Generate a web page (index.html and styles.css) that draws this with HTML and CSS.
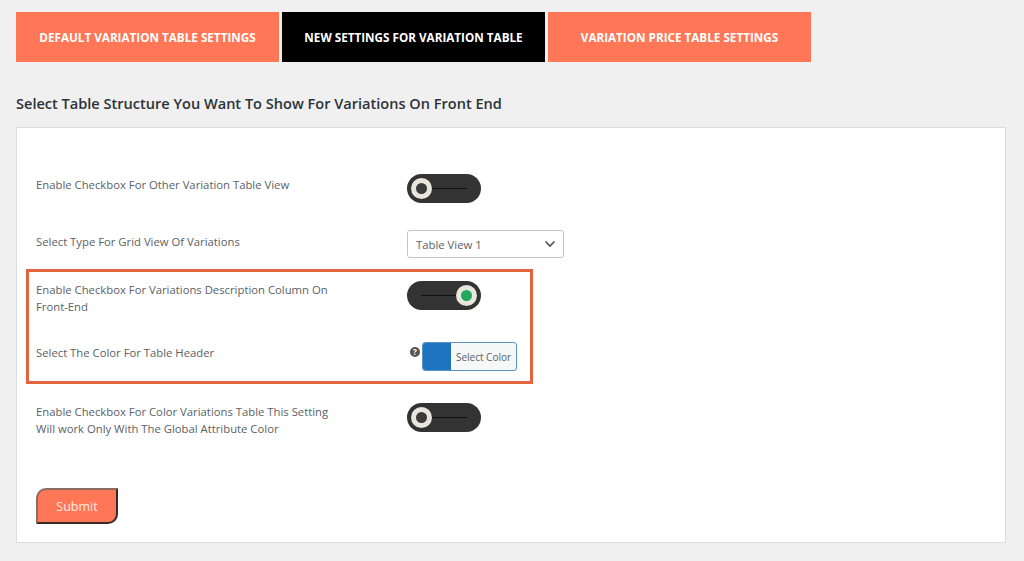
FILE: index.html
```html
<!DOCTYPE html>
<html lang="en">
<head>
<meta charset="UTF-8">
<meta name="viewport" content="width=device-width, initial-scale=1.0">
<title>Variation Table Settings</title>
<link rel="stylesheet" href="styles.css">
</head>
<body>
<div class="tabs">
<div class="tab">Default Variation Table Settings</div>
<div class="tab active">New Settings For Variation Table</div>
<div class="tab">Variation Price Table Settings</div>
</div>
<h2 class="page-title">Select Table Structure You Want To Show For Variations On Front End</h2>
<div class="card">
<div class="row row-first">
<div class="row-label">Enable Checkbox For Other Variation Table View</div>
<div class="toggle"><span class="toggle-line"></span><span class="knob"></span></div>
</div>
<div class="row row-select">
<div class="row-label">Select Type For Grid View Of Variations</div>
<div class="select">
<span>Table View 1</span>
<svg width="12" height="8" viewBox="0 0 12 8"><path d="M1.5 1.5 L6 6 L10.5 1.5" fill="none" stroke="#555" stroke-width="1.7"/></svg>
</div>
</div>
<div class="highlight">
<div class="row">
<div class="row-label label-top">Enable Checkbox For Variations Description Column On Front-End</div>
<div class="toggle on"><span class="toggle-line"></span><span class="knob"></span></div>
</div>
<div class="row row-color">
<div class="row-label">Select The Color For Table Header</div>
<div class="color-wrap">
<span class="help">?</span>
<div class="color-button">
<span class="swatch"></span>
<span class="color-text">Select Color</span>
</div>
</div>
</div>
</div>
<div class="row row-last">
<div class="row-label label-top">Enable Checkbox For Color Variations Table This Setting Will work Only With The Global Attribute Color</div>
<div class="toggle"><span class="toggle-line"></span><span class="knob"></span></div>
</div>
<button class="submit">Submit</button>
</div>
</body>
</html>
```

FILE: styles.css
```css
* {
  margin: 0;
  padding: 0;
  box-sizing: border-box;
}

body {
  background-color: #f0f0f0;
  font-family: "Open Sans", "Noto Sans", sans-serif;
  padding: 12px 18px 0 16px;
  height: 561px;
  overflow: hidden;
}

/* Tabs */
.tabs {
  display: flex;
  gap: 3px;
}

.tab {
  width: 263px;
  height: 50px;
  background-color: #ff7756;
  color: #fff;
  display: flex;
  align-items: center;
  justify-content: center;
  font-size: 11.7px;
  font-weight: 700;
  text-transform: uppercase;
}

.tab.active {
  background-color: #000;
}

.page-title {
  font-size: 14.55px;
  font-weight: 600;
  line-height: 20px;
  color: #2c3338;
  margin-top: 31px;
  margin-bottom: 14px;
}

/* Card */
.card {
  background-color: #fff;
  border: 1px solid #dcdcde;
  height: 416px;
  padding: 46px 0 0 19px;
}

.row {
  display: flex;
  align-items: flex-start;
}

.row-label {
  width: 371px;
  padding-right: 70px;
  padding-top: 2px;
  font-size: 11.3px;
  line-height: 17px;
  color: #5a6167;
}

.label-top {
  padding-top: 0;
}

.row-select {
  margin-top: 27px;
}

.row-select .row-label {
  padding-top: 3px;
}

/* Highlighted settings */
.highlight {
  width: 507px;
  height: 115px;
  margin: 11px 0 0 -10px;
  border: 3px solid #e4653d;
  padding: 9px 0 0 7px;
}

.row-color {
  margin-top: 27px;
}

.row-last {
  margin-top: 19px;
}

/* Toggle */
.toggle {
  width: 74px;
  height: 29px;
  background-color: #333;
  border-radius: 15px;
  position: relative;
}

.toggle-line {
  position: absolute;
  left: 14px;
  top: 14px;
  width: 46px;
  height: 1px;
  background-color: #111;
}

.knob {
  position: absolute;
  left: 4px;
  top: 4px;
  width: 21px;
  height: 21px;
  border-radius: 50%;
  border: 5px solid #e6e6dc;
  background-color: #3a3a3a;
}

.toggle.on .knob {
  left: auto;
  right: 4px;
  background-color: #22a75c;
}

/* Select */
.select {
  width: 157px;
  height: 28px;
  border: 1px solid #c3c4c7;
  border-radius: 3px;
  padding: 0 7px 0 8px;
  display: flex;
  align-items: center;
  justify-content: space-between;
  font-size: 11.3px;
  color: #5a6167;
}

/* Color picker */
.color-wrap {
  display: flex;
  align-items: flex-start;
  margin-left: 3px;
}

.help {
  width: 10px;
  height: 10px;
  margin: 5px 2px 0 0;
  border-radius: 50%;
  background-color: #555;
  color: #fff;
  font-size: 8px;
  font-weight: 700;
  line-height: 10px;
  text-align: center;
}

.color-button {
  width: 95px;
  height: 29px;
  display: flex;
  border: 1px solid #5b93c4;
  border-radius: 3px;
  overflow: hidden;
  background-color: #f6f7f7;
}

.swatch {
  width: 28px;
  background-color: #1e73be;
}

.color-text {
  flex: 1;
  text-align: center;
  font-size: 10px;
  line-height: 28px;
  color: #5a6167;
}

/* Submit */
.submit {
  display: block;
  width: 82px;
  height: 36px;
  margin-top: 51px;
  background-color: #ff7756;
  color: #ffe9e2;
  font-family: inherit;
  font-size: 12.5px;
  border: 2px solid #3a2a25;
  border-top-color: #8a6c60;
  border-left-color: #8a6c60;
  border-radius: 10px 0 10px 0;
}
```
